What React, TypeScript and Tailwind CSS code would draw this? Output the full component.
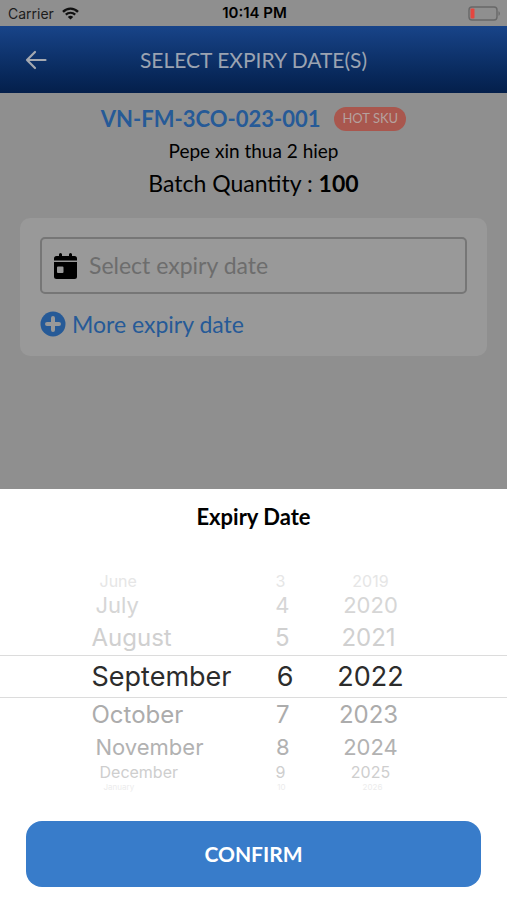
import React from "react";

type WheelRow = {
  month: string;
  day: string;
  year: string;
  className: string;
  selected?: boolean;
};

const rows: WheelRow[] = [
  { month: "June", day: "3", year: "2019", className: "h-[18px] pl-2 pr-2 text-[16px] leading-[18px] text-[#e6e6e6]" },
  { month: "July", day: "4", year: "2020", className: "h-[31px] pl-1 pr-1 text-[22px] leading-[31px] text-[#d6d6d6]" },
  { month: "August", day: "5", year: "2021", className: "h-[34px] pr-1 text-[24px] leading-[34px] text-[#d0d0d0]" },
  { month: "September", day: "6", year: "2022", className: "h-[41px] text-[27px] leading-[41px] text-[#2c2c2c]", selected: true },
  { month: "October", day: "7", year: "2023", className: "h-[34px] pr-1 text-[24px] leading-[34px] text-[#acacac]" },
  { month: "November", day: "8", year: "2024", className: "h-[31px] pl-1 pr-1 text-[22px] leading-[31px] text-[#b2b2b2]" },
  { month: "December", day: "9", year: "2025", className: "h-[18px] pl-2 pr-2 text-[16px] leading-[18px] text-[#cecece]" },
  { month: "January", day: "10", year: "2026", className: "h-[12px] pl-3 pr-2 text-[8px] leading-[12px] text-[#ececec]" },
];

function StatusBar() {
  return (
    <div className="grid h-[26px] grid-cols-3 items-center pr-[6px] pl-2 font-['Inter','Liberation_Sans',sans-serif] text-[14px] text-[#1c1c1c]">
      <div className="flex items-center gap-2">
        <span>Carrier</span>
        <svg width="17" height="13" viewBox="0 0 17 13" fill="none" aria-hidden="true">
          <path d="M1 4.800C5.200.6 11.800.6 16 4.800" stroke="#111" strokeWidth="2.4" />
          <path d="M3.800 7.600c2.600-2.500 6.800-2.500 9.400 0" stroke="#111" strokeWidth="2.2" />
          <path d="M8.500 12.600 5.800 9.900c1.500-1.400 3.900-1.400 5.400 0z" fill="#111" />
        </svg>
      </div>
      <span className="text-center text-[15px] font-semibold text-black">10:14 PM</span>
      <svg className="justify-self-end" width="33" height="15" viewBox="0 0 33 15" fill="none" aria-hidden="true">
        <rect x="1" y="1" width="28" height="13" rx="3" stroke="#686868" strokeWidth="1.4" />
        <rect x="2.5" y="2.5" width="4" height="10" rx="1" fill="#e5463f" />
        <path d="M30.5 5.200c1.800.6 1.800 4 0 4.600z" fill="#686868" />
      </svg>
    </div>
  );
}

function Header() {
  return (
    <header className="grid h-[67px] grid-cols-[72px_1fr_72px] items-center bg-linear-to-b from-[#184489] to-[#041f4b] text-[#9ba3b1]">
      <button type="button" aria-label="Back" className="flex h-full items-center justify-center">
        <svg width="22" height="20" viewBox="0 0 22 20" fill="none" stroke="#a5a9b1" strokeWidth="2.2" strokeLinecap="round" strokeLinejoin="round" aria-hidden="true">
          <path d="M20.500 10H2M10 2 2 10l8 8" />
        </svg>
      </button>
      <h1 className="text-center text-[21px] leading-6 whitespace-nowrap">SELECT EXPIRY DATE(S)</h1>
    </header>
  );
}

function Summary() {
  return (
    <section className="flex flex-col items-center pt-[10px] text-black">
      <div className="flex items-center gap-[14px]">
        <h2 className="text-[22px] leading-8 font-bold text-[#265a97]">VN-FM-3CO-023-001</h2>
        <span className="flex h-6 items-center rounded-full bg-[#a9574e] px-2 text-[13px] text-[#b5a19e]">HOT SKU</span>
      </div>
      <p className="text-[19px] leading-8">Pepe xin thua 2 hiep</p>
      <p className="text-[23px] leading-8">
        Batch Quantity : <strong>100</strong>
      </p>
    </section>
  );
}

function ExpiryCard() {
  return (
    <section className="mx-5 mt-[19px] rounded-[10px] bg-[#999] px-5 pt-[19px] pb-4">
      <label className="flex h-[57px] items-center rounded-[5px] border-2 border-[#767676] px-3">
        <svg width="23" height="26" viewBox="0 0 23 26" aria-hidden="true">
          <path fill="#000" d="M5 1.500a1.500 1.500 0 0 1 3 0V3h7V1.500a1.500 1.500 0 0 1 3 0V3h2.500A2.500 2.500 0 0 1 23 5.500V7.500H0V5.500A2.500 2.500 0 0 1 2.500 3H5z" />
          <path fill="#000" fillRule="evenodd" d="M0 9h23v14.500a2.500 2.500 0 0 1-2.500 2.500h-18A2.500 2.500 0 0 1 0 23.500zm4 4.500a1 1 0 0 0-1 1V19a1 1 0 0 0 1 1h4.500a1 1 0 0 0 1-1v-4.500a1 1 0 0 0-1-1z" />
        </svg>
        <input
          type="text"
          readOnly
          aria-label="Expiry date"
          placeholder="Select expiry date"
          className="ml-3 min-w-0 flex-1 bg-transparent text-[23px] outline-none placeholder:text-[#6d6d6d]"
        />
      </label>
      <button type="button" className="mt-[14px] flex h-8 items-center gap-[6px] text-[23px] text-[#265a97]">
        <svg width="26" height="26" viewBox="0 0 26 26" aria-hidden="true">
          <circle cx="13" cy="13" r="12.500" fill="#265a97" />
          <path d="M13 7v12M7 13h12" stroke="#999" strokeWidth="4" strokeLinecap="round" />
        </svg>
        More expiry date
      </button>
    </section>
  );
}

function DateWheel() {
  return (
    <div role="listbox" aria-label="Expiry date" className="mt-[39px] font-['Inter','Liberation_Sans',sans-serif]">
      {rows.map((row) => (
        <div
          key={row.month}
          role="option"
          aria-selected={Boolean(row.selected)}
          className={row.selected ? "border-y border-[#dcdcdc]" : ""}
        >
          <div className="mx-auto grid max-w-[324px] grid-cols-[168px_34px_1fr]">
            <span className={row.className}>{row.month}</span>
            <span className={row.className + " text-right"}>{row.day}</span>
            <div className="pl-[32px] text-center">
              <span className={row.className + " block"}>{row.year}</span>
            </div>
          </div>
        </div>
      ))}
    </div>
  );
}

export default function App() {
  return (
    <div className="flex min-h-screen flex-col bg-[#8f8f8f] font-['Lato','Open_Sans',sans-serif]">
      <StatusBar />
      <Header />
      <main className="flex-1">
        <Summary />
        <ExpiryCard />
      </main>
      <section role="dialog" aria-labelledby="sheet-title" className="bg-white pt-3 pb-[13px]">
        <h2 id="sheet-title" className="text-center text-[22px] leading-8 font-bold text-black">
          Expiry Date
        </h2>
        <DateWheel />
        <div className="px-[26px] pt-7">
          <button type="button" className="h-[66px] w-full rounded-[16px] bg-[#387cca] text-[21px] font-bold text-white">
            CONFIRM
          </button>
        </div>
      </section>
    </div>
  );
}
